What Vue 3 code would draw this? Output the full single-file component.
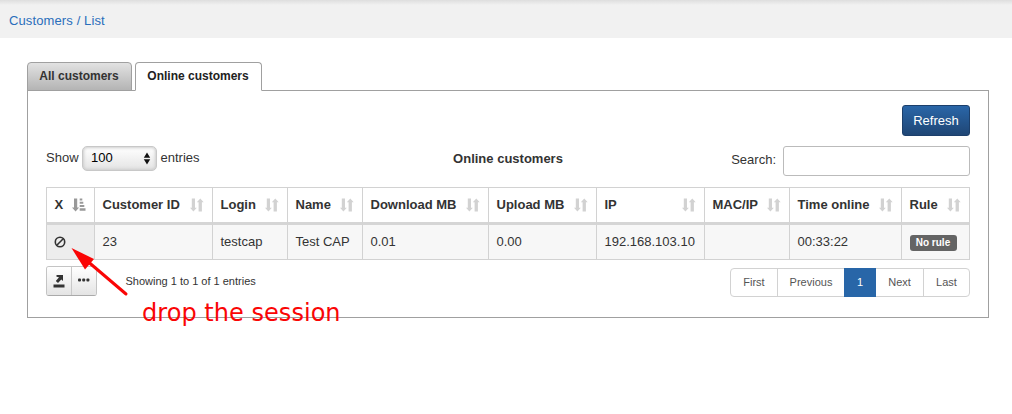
<script setup>
const columns = [
  { label: 'X', width: 49, value: '', sorted: true },
  { label: 'Customer ID', width: 118, value: '23' },
  { label: 'Login', width: 75, value: 'testcap' },
  { label: 'Name', width: 75, value: 'Test CAP' },
  { label: 'Download MB', width: 126, value: '0.01' },
  { label: 'Upload MB', width: 108, value: '0.00' },
  { label: 'IP', width: 108, value: '192.168.103.10' },
  { label: 'MAC/IP', width: 85, value: '' },
  { label: 'Time online', width: 112, value: '00:33:22' },
  { label: 'Rule', width: 68, value: 'No rule', badge: true },
]
const pages = ['First', 'Previous', '1', 'Next', 'Last']
</script>

<template>
  <div class="page">
    <header class="crumbs">Customers / List</header>
    <main class="content">
      <nav class="tabs">
        <div class="tab">All customers</div>
        <div class="tab active">Online customers</div>
      </nav>
      <section class="panel">
        <div class="actions"><button class="refresh">Refresh</button></div>
        <div class="tools">
          <div class="length">
            <span>Show</span>
            <div class="select">
              <span>100</span>
              <svg width="8" height="13" viewBox="0 0 8 13"><path d="M4 .5 7.2 5.7H.8zM4 12.5.8 7.3h6.4z" fill="#111" /></svg>
            </div>
            <span>entries</span>
          </div>
          <strong class="title">Online customers</strong>
          <label class="search"><span>Search:</span><input type="text" /></label>
        </div>
        <table>
          <colgroup><col v-for="c in columns" :key="c.label" :style="{ width: c.width + 'px' }" /></colgroup>
          <thead>
            <tr>
              <th v-for="c in columns" :key="c.label">
                <div class="head">
                  <span>{{ c.label }}</span>
                  <svg v-if="c.sorted" class="sort on" width="14" height="14" viewBox="0 0 14 14"><path d="M2 .5h3.2v9h1.9L3.6 13.5 0 9.5h2zM7.7 .5h2.6v2H7.7zM7.7 3.8h3.6v2H7.7zM7.7 7.1h4.6v2H7.7zM7.7 10.3h5.8v2.4H7.7z" /></svg>
                  <svg v-else class="sort" width="14" height="14" viewBox="0 0 14 14"><path d="M1.8 .5H5v9.2h1.8L3.4 13.5 0 9.7h1.8zM8.6 13.5h3.3V4.3h1.8L10.3.5 6.8 4.3h1.8z" /></svg>
                </div>
              </th>
            </tr>
          </thead>
          <tbody>
            <tr>
              <td v-for="c in columns" :key="c.label" :class="{ sorted: c.sorted }">
                <svg v-if="c.sorted" class="ban" width="12" height="12" viewBox="0 0 12 12"><circle cx="6" cy="6" r="4.7" /><path d="M2.8 9.2 9.2 2.8" /></svg>
                <span v-else-if="c.badge" class="badge">{{ c.value }}</span>
                <template v-else>{{ c.value }}</template>
              </td>
            </tr>
          </tbody>
        </table>
        <footer class="foot">
          <div class="left">
            <div class="group">
              <button><svg width="12" height="13" viewBox="0 0 12 13"><path d="M3.5 0H10v6L8.3 4.4 5 8 2.8 6 6 2.3 3.5 1.8zM.5 9.5h11v3H.5z" /></svg></button>
              <button><svg width="12" height="4" viewBox="0 0 12 4"><rect x="0" y=".5" width="3" height="3" rx="1" /><rect x="4.2" y=".5" width="3" height="3" rx="1" /><rect x="8.4" y=".5" width="3" height="3" rx="1" /></svg></button>
            </div>
            <span class="info">Showing 1 to 1 of 1 entries</span>
          </div>
          <div class="pager">
            <span v-for="p in pages" :key="p" :class="['p-' + p.toLowerCase(), { current: p === '1' }]">{{ p }}</span>
          </div>
        </footer>
      </section>
    </main>
    <svg class="arrow" width="60" height="52" viewBox="0 0 60 52"><path d="M55 47 18 15.500" stroke="#fa0505" stroke-width="3" stroke-linecap="round" /><path d="M.5 1 23 12 14 22.500z" fill="#fa0505" /></svg>
    <div class="note">drop the session</div>
  </div>
</template>

<style>
body {
  margin: 0;
  background: #fff;
}
</style>

<style scoped>
.page {
  position: relative;
  width: 1012px;
  height: 414px;
  overflow: hidden;
  font: 13px/18px "Liberation Sans", Arial, sans-serif;
  color: #333;
}
.page * {
  box-sizing: border-box;
}
.crumbs {
  height: 38px;
  padding: 12px 9px 0;
  line-height: 17px;
  letter-spacing: 0.12px;
  color: #2a6ebb;
  background: linear-gradient(#dedede, #f1f1f1 5px);
}
.content {
  padding: 24px 23px 0 27px;
}
.tabs {
  display: flex;
  gap: 3px;
  position: relative;
  height: 29px;
  z-index: 1;
}
.tab {
  width: 105px;
  height: 29px;
  padding-right: 1px;
  border: 1px solid #a0a0a0;
  border-radius: 4px 4px 0 0;
  background: linear-gradient(#e2e2e2, #b4b4b4);
  font-weight: bold;
  font-size: 12px;
  line-height: 26px;
  text-align: center;
}
.tab.active {
  width: 127px;
  background: #fff;
  border-bottom-color: #fff;
  color: #222;
}
.panel {
  height: 228px;
  margin-top: -1px;
  padding: 14px 18px 0;
  border: 1px solid #a0a0a0;
}
.actions {
  display: flex;
  justify-content: flex-end;
}
button {
  padding: 0;
  font: inherit;
}
.refresh {
  width: 68px;
  height: 31px;
  border: 1px solid #1c3f6b;
  border-radius: 3px;
  background: linear-gradient(#2a66a8, #1f4675);
  color: #fff;
}
.tools {
  display: grid;
  grid-template-columns: 1fr auto 1fr;
  height: 51px;
  padding-top: 10px;
}
.length {
  display: flex;
  align-items: center;
  gap: 3.5px;
  height: 24px;
}
.select {
  display: flex;
  align-items: center;
  justify-content: space-between;
  width: 75px;
  height: 25px;
  padding: 0 5px 0 8px;
  border: 1px solid #c8c8c8;
  border-radius: 5px;
  background: linear-gradient(#fff, #e4e4e4);
  box-shadow: inset 0 0 3px 1px #ccc;
  color: #000;
}
.title {
  margin-top: 4px;
}
.search {
  display: flex;
  justify-content: flex-end;
  gap: 7px;
  line-height: 27px;
}
.search input {
  width: 187px;
  height: 30px;
  border: 1px solid #bbb;
  border-radius: 3px;
  background: #fff;
}
table {
  width: 924px;
  table-layout: fixed;
  border-collapse: separate;
  border-spacing: 0;
}
th,
td {
  padding: 0 8px 0 7.5px;
  border-right: 1px solid #d2d2d2;
  text-align: left;
  white-space: nowrap;
}
th:first-child,
td:first-child {
  border-left: 1px solid #d2d2d2;
}
th {
  height: 38px;
  border-top: 1px solid #d2d2d2;
  border-bottom: 3px solid #d5d5d5;
}
td {
  height: 35px;
  border-bottom: 1px solid #d2d2d2;
  background: #f7f7f7;
}
td.sorted {
  background: #ededed;
}
.head {
  display: flex;
  align-items: center;
  justify-content: space-between;
}
.sort {
  flex: none;
  fill: #d2d2d2;
}
.sort.on {
  fill: #999;
}
.ban {
  display: block;
  margin-left: -0.5px;
  fill: none;
  stroke: #333;
  stroke-width: 1.6;
}
.badge {
  display: block;
  width: 47px;
  height: 16px;
  margin-top: 2px;
  border-radius: 3px;
  background: #646464;
  color: #fff;
  font: bold 10px/16px "Liberation Sans", Arial, sans-serif;
  text-align: center;
}
.foot {
  display: flex;
  justify-content: space-between;
}
.left {
  display: flex;
  padding-top: 6px;
}
.group {
  display: flex;
  width: 51px;
  height: 30px;
  border: 1px solid #c4c4c4;
  border-bottom-color: #aaa;
  border-radius: 3px;
  overflow: hidden;
}
.group button {
  display: flex;
  align-items: center;
  justify-content: center;
  width: 24px;
  border: 0;
  background: linear-gradient(#fff, #e4e4e4);
  fill: #333;
}
.group button + button {
  width: 25px;
  border-left: 1px solid #c8c8c8;
}
.group button + button svg {
  margin-bottom: 2px;
}
.info {
  margin: 6px 0 0 28.5px;
  font-size: 11px;
}
.pager {
  display: flex;
  height: 29px;
  margin-top: 8px;
  border: 1px solid #d2d2d2;
  border-radius: 4px;
  font-size: 11px;
  line-height: 27px;
  text-align: center;
  color: #555;
}
.p-first {
  width: 47px;
  border-right: 1px solid #d2d2d2;
}
.p-previous {
  width: 66px;
}
.pager .current {
  width: 32px;
  height: 29px;
  margin-top: -1px;
  line-height: 29px;
  background: #2866a8;
  color: #fff;
}
.p-next {
  width: 48px;
  border-right: 1px solid #d2d2d2;
}
.p-last {
  width: 45px;
}
.arrow {
  position: absolute;
  left: 71px;
  top: 247px;
}
.note {
  position: absolute;
  left: 142px;
  top: 298px;
  color: #fa0505;
  font: 24px/30px "DejaVu Sans", Verdana, sans-serif;
  letter-spacing: 0.04px;
  white-space: nowrap;
}
</style>
